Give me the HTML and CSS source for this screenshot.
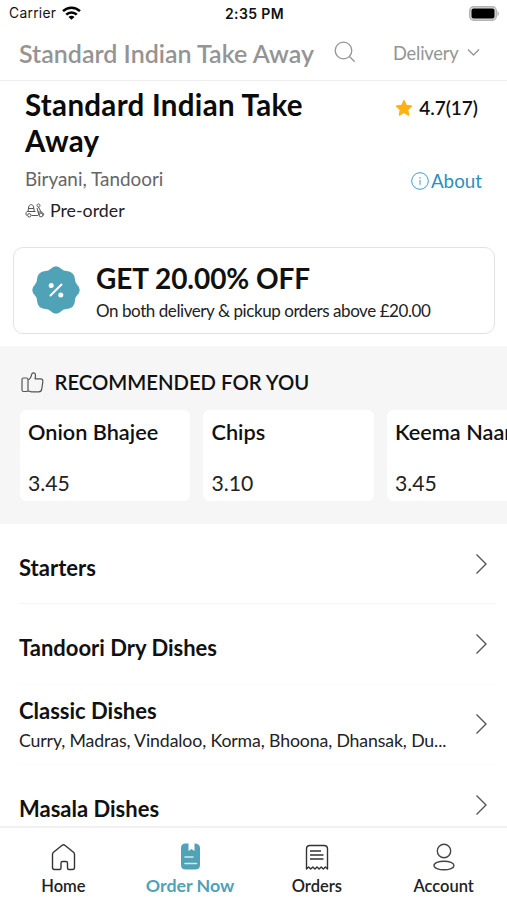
FILE: index.html
```html
<!DOCTYPE html>
<html lang="en">
<head>
<meta charset="utf-8">
<title>Standard Indian Take Away</title>
<link rel="stylesheet" href="styles.css">
</head>
<body>
<div class="app">
  <div class="status">
    <div class="carrier"><span>Carrier</span>
      <svg width="19" height="14" viewBox="0 0 19 14" fill="none" stroke="#000" stroke-width="2.5"><path d="M1 5.2C5.8.6 13.200.6 18 5.200"/><path d="M4.200 8.600c3-2.900 7.600-2.900 10.600 0"/><path d="M9.500 13.800 6.500 10.900c1.700-1.500 4.300-1.500 6 0z" fill="#000" stroke="none"/></svg>
    </div>
    <div class="clock">2:35 PM</div>
    <svg class="battery" width="31" height="15" viewBox="0 0 31 15"><rect x=".7" y=".7" width="26.600" height="13.600" rx="4" fill="#ddd" stroke="#b3b3b3" stroke-width="1.400"/><rect x="2.500" y="2.500" width="23" height="10" rx="2" fill="#000"/><path d="M28.500 5c1.800.5 1.800 4.500 0 5z" fill="#aaa"/></svg>
  </div>

  <header class="topbar">
    <div class="topname">Standard Indian Take Away</div>
    <svg class="search" width="22" height="22" viewBox="0 0 22 22" fill="none" stroke="#949494" stroke-width="1.300"><circle cx="9.500" cy="9.500" r="8.300"/><path d="m15.500 15.500 5.200 5.200"/></svg>
    <div class="mode">Delivery</div>
    <svg width="13" height="9" viewBox="0 0 13 9" fill="none" stroke="#949494" stroke-width="1.300"><path d="m1 1.500 5.500 5.500L12 1.500"/></svg>
  </header>

  <main>
    <section class="info">
      <div class="about-place">
        <h1>Standard Indian Take<br>Away</h1>
        <div class="cuisine">Biryani, Tandoori</div>
        <div class="preorder">
          <svg width="20" height="15" viewBox="0 0 20 15" fill="none" stroke="#555" stroke-width="1" stroke-linejoin="round"><path d="M3 8.500 3.700 4C4.300.8 8 .8 8.600 4l.7 4.500M3.500 5.500h5.300M2 8.500h8.500"/><path d="M2 8.500C.5 10 .5 12 2 12.500M6.500 12.500h5.500c1.500 0 2-1 1.500-2.500L12 5M12 2.500c0-2 3-2 3 0S12 4.500 12 2.500M13.500 4l2.500 5c2.500.3 3 2 2.500 3.500M12.500 9H16"/><circle cx="4.300" cy="12.300" r="1.700"/><circle cx="16" cy="12" r="1.900"/></svg>
          <span>Pre-order</span>
        </div>
      </div>
      <div class="side">
        <div class="rating"><svg width="18" height="18" viewBox="0 0 18 18"><path d="m9 1.400 2.300 4.900 5.300.7-3.900 3.700 1 5.400L9 13.500l-4.700 2.600 1-5.400L1.400 7l5.300-.7z" fill="#fcb211" stroke="#fcb211" stroke-width="1.200" stroke-linejoin="round"/></svg><span>4.7(17)</span></div>
        <div class="about"><svg width="18" height="18" viewBox="0 0 18 18" fill="none" stroke="#3d9fc8"><circle cx="9" cy="9" r="8.300"/><path d="M9 7.800v5M9 5v1.500"/></svg><span>About</span></div>
      </div>
    </section>

    <section class="offer">
      <svg class="badge" width="48" height="48" viewBox="0 0 48 48"><path d="M18.500 3Q24-2.500 29.500 3Q31.500 5 34.500 5Q42.500 5.500 43 13.500Q43 16.500 45 18.500Q50.500 24 45 29.500Q43 31.500 43 34.500Q42.500 42.500 34.500 43Q31.500 43 29.500 45Q24 50.500 18.500 45Q16.500 43 13.500 43Q5.500 42.500 5 34.500Q5 31.500 3 29.500Q-2.500 24 3 18.500Q5 16.500 5 13.500Q5.500 5.500 13.500 5Q16.500 5 18.500 3Z" fill="#50a2b6"/><path d="m18.500 29.500 11-11" stroke="#fff" stroke-width="2" stroke-linecap="round"/><circle cx="19.200" cy="19.500" r="2.500" fill="#fff"/><circle cx="28.800" cy="29" r="2.500" fill="#fff"/></svg>
      <div>
        <div class="offer-title">GET 20.00% OFF</div>
        <div class="offer-text">On both delivery &amp; pickup orders above £20.00</div>
      </div>
    </section>

    <section class="recommended">
      <div class="rec-head">
        <svg width="23" height="21" viewBox="0 0 23 21" fill="none" stroke="#555" stroke-width="1.200" stroke-linejoin="round"><path d="M2.500 6h3c1 0 1.500.5 1.500 1.500v10.500c0 1-.5 1.500-1.500 1.500h-3C1.500 19.500 1 19 1 18v-10.500C1 6.500 1.500 6 2.500 6zM7 8c2.300-.8 3.200-3.500 3.700-5.700.4-2 3.200-1.800 3.700.2.300 1.500 0 3-.4 4.300h5.500c2 0 2.500 1.300 2.300 3l-1 7c-.3 2-1.200 3-3 3H10.500c-1.500 0-2.200-1-3.500-1"/></svg>
        <span>RECOMMENDED FOR YOU</span>
      </div>
      <div class="cards">
        <article class="dish"><div class="dish-name">Onion Bhajee</div><div class="price">3.45</div></article>
        <article class="dish"><div class="dish-name">Chips</div><div class="price">3.10</div></article>
        <article class="dish"><div class="dish-name">Keema Naan</div><div class="price">3.45</div></article>
      </div>
    </section>

    <section class="menu">
      <div class="row first"><div class="row-name">Starters</div><svg class="chev" width="13" height="22" viewBox="0 0 13 22"><path d="m1.500 1.500 9.500 9.500-9.500 9.500"/></svg></div>
      <div class="row"><div class="row-name">Tandoori Dry Dishes</div><svg class="chev" width="13" height="22" viewBox="0 0 13 22"><path d="m1.500 1.500 9.500 9.500-9.500 9.500"/></svg></div>
      <div class="row two"><div><div class="row-name">Classic Dishes</div><div class="row-text">Curry, Madras, Vindaloo, Korma, Bhoona, Dhansak, Du...</div></div><svg class="chev" width="13" height="22" viewBox="0 0 13 22"><path d="m1.500 1.500 9.500 9.500-9.500 9.500"/></svg></div>
      <div class="row"><div class="row-name">Masala Dishes</div><svg class="chev" width="13" height="22" viewBox="0 0 13 22"><path d="m1.500 1.500 9.500 9.500-9.500 9.500"/></svg></div>
    </section>
  </main>

  <nav class="tabs">
    <div class="tab"><svg width="28" height="28" viewBox="0 0 28 28" fill="none" stroke="#333" stroke-width="1.400" stroke-linejoin="round"><path d="M3.500 11.500c0-1 .2-1.500 1-2.200L13.200 2.200c.9-.7 1.700-.7 2.600 0l8.700 7.100c.8.700 1 1.200 1 2.200v13c0 1.500-.6 2-2 2h-3.500c-1 0-1.500-.5-1.500-1.500v-5c0-1-.5-1.500-1.500-1.500h-3.500c-1 0-1.500.5-1.500 1.500v5c0 1-.5 1.500-1.500 1.500H5.500c-1.400 0-2-.5-2-2z"/></svg><span>Home</span></div>
    <div class="tab active"><svg width="28" height="28" viewBox="0 0 28 28"><path d="M9.500.5h3V8l3-2 3 2V.5c3.500 0 5.500 1.500 5.500 4.500v17c0 3-1.700 4.500-5 4.500H10c-3.300 0-5-1.500-5-4.500V5C5 2 6.500.5 9.500.5z" fill="#50a2b6"/><path d="M9 14h8M9 20.500h11.500" stroke="#d5eaf0" stroke-width="1.600" stroke-linecap="round"/></svg><span>Order Now</span></div>
    <div class="tab"><svg width="28" height="28" viewBox="0 0 28 28" fill="none" stroke="#333" stroke-width="1.400" stroke-linejoin="round"><path d="M3.500 26V6c0-2.500 1-3.500 3.500-3.500h14c2.500 0 3.500 1 3.500 3.500v20l-2.100-2-2.100 2-2.100-2-2.100 2-2.100-2-2.100 2-2.100-2-2.100 2-2.100-2zM7 8h11M7 12h13.500M7 16h13.500"/></svg><span>Orders</span></div>
    <div class="tab"><svg width="28" height="28" viewBox="0 0 28 28" fill="none" stroke="#444" stroke-width="1.400"><circle cx="14" cy="8" r="6.700"/><ellipse cx="14" cy="22.500" rx="10" ry="4.300"/></svg><span>Account</span></div>
  </nav>
</div>
</body>
</html>
```

FILE: styles.css
```css
* { box-sizing: border-box; }
body { margin: 0; background: #fff; color: #111; font-family: Lato, "Liberation Sans", sans-serif; }
h1 { margin: 0; }
svg { display: block; flex: none; }
.app { width: 507px; height: 900px; display: flex; flex-direction: column; overflow: hidden; white-space: nowrap; }
.status { flex: none; height: 27px; display: grid; grid-template-columns: 1fr auto 1fr; align-items: center; padding: 0 7px 0 9px; font-family: Inter, sans-serif; font-size: 13.800px; color: #111; }
.carrier { display: flex; align-items: center; gap: 6px; margin-top: -1px; letter-spacing: .3px; }
.clock { font-weight: 600; font-size: 14px; letter-spacing: .4px; }
.battery { justify-self: end; margin-top: -1px; }
.topbar { flex: none; height: 54px; display: flex; align-items: center; padding: 0 27px 2px 19px; border-bottom: 1px solid #eee; color: #949494; }
.topname { font-size: 25px; font-weight: 600; width: 315px; }
.search { margin: -2px 37px 0 0; }
.mode { font-size: 18.300px; letter-spacing: -.2px; width: 74px; }
main { flex: 1; min-height: 0; overflow: hidden; }
.info { height: 166px; padding: 6px 25px 0; display: flex; justify-content: space-between; }
h1 { font-size: 29.500px; line-height: 36px; font-weight: 700; letter-spacing: .3px; color: #0b0b0b; }
.cuisine { margin-top: 8px; font-size: 18.900px; line-height: 24px; color: #666; }
.preorder { margin-top: 8px; display: flex; align-items: center; gap: 5px; font-size: 17.800px; line-height: 22px; color: #222; }
.side { display: flex; flex-direction: column; align-items: flex-end; }
.rating { margin-top: 10px; display: flex; align-items: center; gap: 6px; margin-right: 4px; font-size: 19px; line-height: 22px; font-weight: 600; }
.about { margin-top: 51px; display: flex; align-items: center; gap: 2px; font-size: 18.800px; line-height: 22px; color: #2b8fbc; }
.offer { margin: 0 12px 12px 13px; height: 87px; border: 1.500px solid #e3e3e3; border-radius: 10px; display: flex; align-items: center; padding-left: 18px; gap: 16px; }
.badge { margin-top: -2px; }
.offer-title { font-size: 28px; line-height: 34px; font-weight: 700; letter-spacing: -.05px; }
.offer-text { margin-top: 6px; font-size: 17px; line-height: 20px; letter-spacing: -.43px; color: #222; }
.recommended { background: #f6f6f6; height: 178px; padding: 26px 0 0 19.500px; overflow: hidden; }
.rec-head { display: flex; align-items: center; gap: 11px; padding-left: 1px; height: 20px; font-size: 20.300px; font-weight: 600; }
.cards { display: flex; gap: 13px; margin-top: 18px; }
.dish { flex: none; width: 170.500px; height: 91px; border-radius: 6px; background: #fff; padding: 8px 8px 0 8.500px; }
.dish-name { font-size: 21.700px; line-height: 28px; font-weight: 600; }
.price { margin-top: 23px; font-size: 21.200px; line-height: 28px; color: #222; }
.row { margin: 0 11px 0 19px; height: 80.300px; padding: 6px 8px 0 0; border-bottom: 1px solid #fcfcfc; display: flex; align-items: center; justify-content: space-between; }
.first { border-bottom-color: #f5f5f5; }
.row-name { margin-top: 2px; font-size: 22px; line-height: 28px; font-weight: 700; }
.two .row-name { margin-top: -4px; }
.row-text { margin-top: 4px; font-size: 17.700px; line-height: 24px; letter-spacing: -.12px; color: #222; }
.chev { margin-top: -6px; fill: none; stroke: #555; stroke-width: 1.400; }
.tabs { flex: none; height: 74px; border-top: 2px solid #f1f1f1; background: #fff; display: grid; grid-template-columns: repeat(4, 1fr); }
.tab { display: flex; flex-direction: column; align-items: center; padding-top: 15px; gap: 3px; font-size: 16.500px; line-height: 24px; font-weight: 600; color: #222; }
.active { color: #50a2b6; font-size: 17.800px; font-weight: 700; gap: 2px; }
```
